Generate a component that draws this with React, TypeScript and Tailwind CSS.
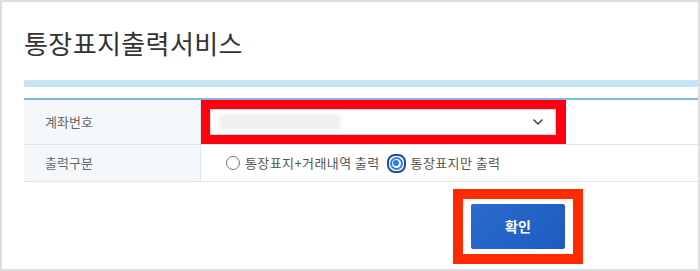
import React from "react";

export default function App() {
  return (
    <div className="w-[700px] h-[271px] border-2 border-[#dedede] bg-white overflow-hidden font-['Noto_Sans_CJK_KR','Noto_Sans',sans-serif]">
      <div className="pl-[22px]">
        <h1 className="pt-[28px] text-[26px] leading-[26px] text-[#333] font-normal tracking-[0.4px]">
          통장표지출력서비스
        </h1>
        <div className="mt-[24px] h-[7px] bg-[#c6e4f6]" />
        <div className="mt-[11px] border-t-2 border-[#7db9e5]">
          <div className="flex h-[45px] border-b border-[#dfe6ed]">
            <div className="w-[177px] shrink-0 bg-[#f4f8fb] border-r border-[#dfe6ed] flex items-center pl-[21px] text-[13px] text-[#666]">
              계좌번호
            </div>
            <div className="w-[365px] h-[44px] border-[9px] border-r-[10px] border-[#ff0010]">
              <div className="h-full bg-white border border-[#d6d6d6] flex items-center justify-between pl-[8px] pr-[12px]">
                <div className="w-[122px] h-[16px] rounded bg-[#efefef] blur-[2px]" />
                <svg width="10" height="6" viewBox="0 0 10 6" fill="none">
                  <path d="M1 1l4 4 4-4" stroke="#444" strokeWidth="1.6" strokeLinecap="round" strokeLinejoin="round" />
                </svg>
              </div>
            </div>
          </div>
          <div className="flex h-[37px] border-b border-[#dfe6ed]">
            <div className="w-[177px] shrink-0 bg-[#f4f8fb] border-r border-[#dfe6ed] flex items-center pl-[21px] text-[13px] text-[#666]">
              출력구분
            </div>
            <div className="flex items-center pl-[25px] text-[13px] text-[#555] tracking-[0.4px]">
              <span className="w-[14px] h-[14px] rounded-full border border-[#767676] bg-white" />
              <span className="ml-[5px]">통장표지+거래내역 출력</span>
              <span className="ml-[7px] w-[19px] h-[19px] rounded-[8px] border-2 border-[#1c4f96] flex items-center justify-center">
                <span className="w-[13px] h-[13px] rounded-full border-2 border-[#2f7ef0] bg-white flex items-center justify-center">
                  <span className="w-[6px] h-[6px] rounded-full bg-[#2f7ef0]" />
                </span>
              </span>
              <span className="ml-[5px]">통장표지만 출력</span>
            </div>
          </div>
        </div>
        <div className="mt-[7px] ml-[429px] w-[130px] h-[75px] border-[10px] border-[#fe2a02] px-[8px] py-[5px]">
          <button className="w-[94px] h-[45px] rounded-[2px] bg-[linear-gradient(135deg,#2a6bcc,#1e5cc0)] text-white text-[14px] font-bold">
            확인
          </button>
        </div>
      </div>
    </div>
  );
}
